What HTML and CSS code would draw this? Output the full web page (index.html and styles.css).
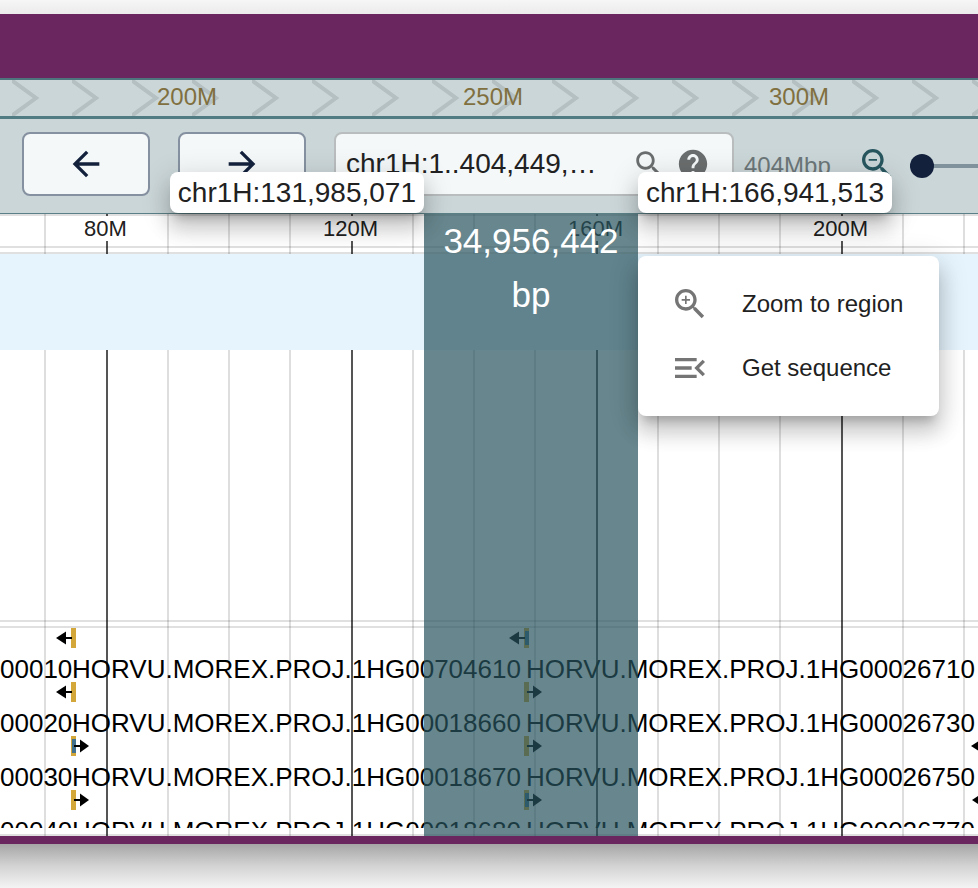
FILE: index.html
```html
<!DOCTYPE html>
<html lang="en">
<head>
<meta charset="utf-8">
<title>Genome view</title>
<link rel="stylesheet" href="styles.css">
</head>
<body>
<svg class="defs" aria-hidden="true">
  <defs>
    <pattern id="chevrons" x="12" y="0" width="60" height="36" patternUnits="userSpaceOnUse">
      <path d="M-2 -1 L24 18 L-2 37" fill="none" stroke="#b4c0c2" stroke-width="4"/>
    </pattern>
    <pattern id="gridlines" x="106" y="0" width="245" height="100" patternUnits="userSpaceOnUse">
      <path d="M62 0V100M123 0V100M184 0V100" stroke="#000" stroke-opacity=".13" stroke-width="2"/>
      <path d="M1 0V100" stroke="#555" stroke-width="2"/>
    </pattern>
    <g id="arrow-left"><path d="M3 10 13 3.500V16.500Z"/><rect x="12" y="9" width="7" height="2"/></g>
    <g id="arrow-right"><path d="M36 10 27 3.500V16.500Z"/><rect x="21" y="9" width="7" height="2"/></g>
    <rect id="utr" x="18" y="0" width="5" height="20" fill="#d4a73a"/>
    <rect id="cds" x="19" y="3" width="4" height="14" fill="#41718c"/>
  </defs>
</svg>
<div class="shade-top"></div>
<main class="window">
  <div class="overview">
    <svg class="overview-bg" aria-hidden="true"><rect width="100%" height="36" fill="url(#chevrons)"/></svg>
    <div class="overview-labels"><span>200M</span><span>250M</span><span>300M</span></div>
  </div>
  <header class="controls">
    <button class="pan" aria-label="Pan left"><svg class="icon" viewBox="0 0 24 24"><path d="M20 11H7.830l5.590-5.590L12 4l-8 8 8 8 1.410-1.410L7.830 13H20v-2z"/></svg></button>
    <button class="pan" aria-label="Pan right"><svg class="icon" viewBox="0 0 24 24"><path d="M12 4l-1.410 1.410L16.170 11H4v2h12.170l-5.580 5.590L12 20l8-8z"/></svg></button>
    <div class="search">
      <input type="text" aria-label="Location" value="chr1H:1..404,449,…">
      <button aria-label="Search"><svg class="icon-small" viewBox="0 0 24 24"><path d="M15.500 14h-.79l-.28-.27C15.410 12.590 16 11.110 16 9.500 16 5.910 13.090 3 9.500 3S3 5.910 3 9.500 5.910 16 9.500 16c1.610 0 3.090-.59 4.230-1.570l.27.28v.79l5 4.990L20.490 19l-4.990-5zm-6 0C7.010 14 5 11.990 5 9.500S7.010 5 9.500 5 14 7.010 14 9.500 11.990 14 9.500 14z"/></svg></button>
      <button aria-label="Help"><svg class="icon-small" viewBox="0 0 24 24"><path d="M12 2C6.480 2 2 6.480 2 12s4.480 10 10 10 10-4.480 10-10S17.520 2 12 2zm1 17h-2v-2h2v2zm2.070-7.750l-.9.920C13.450 12.900 13 13.500 13 15h-2v-.5c0-1.100.45-2.100 1.170-2.830l1.240-1.260c.37-.36.59-.86.59-1.410 0-1.100-.9-2-2-2s-2 .9-2 2H8c0-2.210 1.790-4 4-4s4 1.790 4 4c0 .88-.36 1.680-.93 2.250z"/></svg></button>
    </div>
    <span class="span-size">404Mbp</span>
    <button class="zoom-out" aria-label="Zoom out"><svg class="icon" viewBox="0 0 24 24"><path d="M15.500 14h-.79l-.28-.27C15.410 12.590 16 11.110 16 9.500 16 5.910 13.090 3 9.500 3S3 5.910 3 9.500 5.910 16 9.500 16c1.610 0 3.090-.59 4.230-1.570l.27.28v.79l5 4.990L20.490 19l-4.990-5zm-6 0C7.010 14 5 11.990 5 9.500S7.010 5 9.500 5 14 7.010 14 9.500 11.990 14 9.500 14zM7 9h5v1H7z"/></svg></button>
    <input class="zoom-slider" type="range" min="0" max="100" value="0" aria-label="Zoom level">
  </header>
  <section class="tracks">
    <svg class="gridlines" aria-hidden="true"><rect width="100%" height="100%" fill="url(#gridlines)"/></svg>
    <div class="ruler"><span>80M</span><span>120M</span><span>160M</span><span>200M</span></div>
    <div class="divider"></div>
    <div class="highlight-track"></div>
    <div class="empty-track"></div>
    <div class="divider"></div>
    <div class="genes">
      <div class="gene-row">
        <svg class="glyph first" viewBox="0 0 40 20"><use href="#utr"/><use href="#arrow-left"/></svg>
        <svg class="glyph" viewBox="0 0 40 20"><use href="#utr"/><use href="#cds"/><use href="#arrow-left"/></svg>
        <span class="cut">00010</span><span>HORVU.MOREX.PROJ.1HG00704610</span><span>HORVU.MOREX.PROJ.1HG00026710</span>
      </div>
      <div class="gene-row">
        <svg class="glyph first" viewBox="0 0 40 20"><use href="#utr"/><use href="#arrow-left"/></svg>
        <svg class="glyph" viewBox="0 0 40 20"><use href="#utr"/><use href="#arrow-right"/></svg>
        <span class="cut">00020</span><span>HORVU.MOREX.PROJ.1HG00018660</span><span>HORVU.MOREX.PROJ.1HG00026730</span>
      </div>
      <div class="gene-row">
        <svg class="glyph first" viewBox="0 0 40 20"><use href="#utr"/><use href="#cds"/><use href="#arrow-right"/></svg>
        <svg class="glyph" viewBox="0 0 40 20"><use href="#utr"/><use href="#arrow-right"/></svg>
        <svg class="glyph-edge" viewBox="2 0 8 20"><use href="#arrow-left"/></svg>
        <span class="cut">00030</span><span>HORVU.MOREX.PROJ.1HG00018670</span><span>HORVU.MOREX.PROJ.1HG00026750</span>
      </div>
      <div class="gene-row">
        <svg class="glyph first" viewBox="0 0 40 20"><use href="#utr"/><use href="#arrow-right"/></svg>
        <svg class="glyph" viewBox="0 0 40 20"><use href="#utr"/><use href="#cds"/><use href="#arrow-right"/></svg>
        <svg class="glyph-edge" viewBox="1 0 8 20"><use href="#arrow-left"/></svg>
        <span class="cut">00040</span><span>HORVU.MOREX.PROJ.1HG00018680</span><span>HORVU.MOREX.PROJ.1HG00026770</span>
      </div>
    </div>
    <div class="divider last"></div>
    <div class="selection">
      <p>34,956,442 bp</p>
      <div class="tip tip-start">chr1H:131,985,071</div>
      <div class="tip tip-end">chr1H:166,941,513</div>
      <div class="menu" role="menu">
        <button role="menuitem"><svg class="icon" viewBox="0 0 24 24"><path d="M15.500 14h-.79l-.28-.27C15.410 12.590 16 11.110 16 9.500 16 5.910 13.090 3 9.500 3S3 5.910 3 9.500 5.910 16 9.500 16c1.610 0 3.090-.59 4.230-1.570l.27.28v.79l5 4.990L20.490 19l-4.990-5zm-6 0C7.010 14 5 11.990 5 9.500S7.010 5 9.500 5 14 7.010 14 9.500 11.990 14 9.500 14zm.5-7H9v2H7v1h2v2h1v-2h2V9h-2z"/></svg>Zoom to region</button>
        <button role="menuitem"><svg class="icon" viewBox="0 0 24 24"><path d="M3 18h13v-2H3v2zm0-5h10v-2H3v2zm0-7v2h13V6H3zm18 9.590L17.420 12 21 8.410 19.590 7l-5 5 5 5L21 15.590z"/></svg>Get sequence</button>
      </div>
    </div>
  </section>
</main>
<div class="shade-bottom"></div>
</body>
</html>
```
FILE: styles.css
```css
* { box-sizing: border-box; }

html { background: #f6f6f6; }

body {
  margin: 0;
  overflow: hidden;
  font-family: "Liberation Sans", Arial, sans-serif;
  color: #212121;
}

button { margin: 0; padding: 0; border: 0; background: none; font: inherit; color: inherit; }

svg { display: block; fill: currentColor; }

.defs { position: absolute; width: 0; height: 0; }

.icon { flex: none; width: 40px; height: 40px; }
.icon-small { width: 34px; height: 34px; }

/* Even drop shadow above and below the full-width frame */
.shade-top { height: 14px; background: linear-gradient(#f6f6f6, #ebebeb); }
.shade-bottom { height: 44px; background: linear-gradient(#a6a6a6, #d3d3d3 50%, #f4f4f4); }

.window {
  padding: 64px 0 8px;
  background: #69265f;
}

.overview {
  position: relative;
  border-top: 2px solid #4c757d;
  border-bottom: 3px solid #517c83;
  background: #cbd6d8;
  overflow: hidden;
}

.overview-bg { position: absolute; inset: 0; width: 100%; height: 36px; }

.overview-labels {
  position: relative;
  display: flex;
  padding: 0 0 2px 34px;
  font-size: 24px;
  line-height: 34px;
  color: #80703f;
}

.overview-labels span { flex: none; width: 306px; text-align: center; }

.controls {
  display: flex;
  align-items: center;
  padding: 13px 0 17px 22px;
  background: #cbd6d8;
}

.pan {
  flex: none;
  display: flex;
  align-items: center;
  justify-content: center;
  width: 128px;
  height: 64px;
  margin-right: 28px;
  border: 2px solid #8591a0;
  border-radius: 8px;
  background: #f4f8f9;
  color: #13213d;
}

.search {
  flex: none;
  display: flex;
  align-items: center;
  gap: 10px;
  width: 400px;
  height: 64px;
  padding: 0 22px 0 10px;
  border: 2px solid #b9bdbd;
  border-radius: 8px;
  background: #f4f8f9;
  color: #6b6e6e;
}

.search input {
  flex: 1;
  min-width: 0;
  padding: 0;
  border: 0;
  outline: 0;
  background: none;
  font: inherit;
  font-size: 28px;
  color: #212121;
}

.span-size { margin: 4px 26px 0 10px; font-size: 24px; line-height: 28px; color: #6c7678; }

.zoom-out { color: #27565f; }

.zoom-slider {
  flex: 1;
  min-width: 0;
  height: 24px;
  margin: 4px 0 0 13px;
  appearance: none;
  background: linear-gradient(#80929c, #80929c) center / 100% 4px no-repeat;
}

.zoom-slider::-webkit-slider-thumb {
  appearance: none;
  width: 24px;
  height: 24px;
  border-radius: 50%;
  background: #13213d;
}

.tracks { position: relative; border-top: 1px solid #5b8187; background: #fff; }

.gridlines { position: absolute; inset: 0; width: 100%; height: 100%; }

.ruler {
  position: relative;
  display: flex;
  height: 34px;
  margin-left: -17px;
  border-top: 2px solid rgba(0, 0, 0, .12);
  border-bottom: 2px solid rgba(0, 0, 0, .12);
  font-size: 22px;
  line-height: 26px;
}

.ruler span { flex: none; width: 245px; text-align: center; }

/* White plate that interrupts the tick behind each number */
.ruler span::before {
  content: "";
  display: block;
  width: 8px;
  height: 25px;
  margin: 0 auto -25px;
  background: #fff;
}

.divider { position: relative; height: 6px; border-bottom: 2px solid rgba(0, 0, 0, .12); }
.divider.last { height: 8px; }

.highlight-track { position: relative; height: 96px; background: #e6f4fd; }

.empty-track { position: relative; height: 272px; border-bottom: 2px solid rgba(0, 0, 0, .12); }

.genes { position: relative; height: 200px; color: #000; overflow: hidden; }

.gene-row {
  display: grid;
  grid-template-columns: 72px 454px 1fr;
  grid-template-rows: 20px 26px;
  row-gap: 8px;
  font-size: 26px;
  line-height: 26px;
  white-space: nowrap;
}

.gene-row .cut { text-align: right; }
.gene-row span { grid-row: 2; }

.glyph { grid-area: 1 / 3; width: 40px; height: 20px; margin-left: -20px; }
.glyph.first { grid-area: 1 / 2; margin-left: -19px; }
.glyph-edge { grid-area: 1 / 3; justify-self: end; width: 8px; height: 20px; }

.selection {
  position: absolute;
  top: 0;
  bottom: 0;
  left: 424px;
  width: 214px;
  background: rgba(39, 82, 92, .7);
}

.selection p {
  margin: 0;
  padding: 0 18px;
  font-size: 35px;
  line-height: 54px;
  text-align: center;
  color: #fff;
}

.tip, .menu {
  position: absolute;
  border-radius: 8px;
  background: #fff;
  box-shadow:
    0 10px 10px -6px rgba(0, 0, 0, .2),
    0 16px 20px 2px rgba(0, 0, 0, .14),
    0 6px 28px 4px rgba(0, 0, 0, .12);
}

.tip {
  bottom: 100%;
  margin-bottom: 1px;
  padding: 0 8px;
  font-size: 28px;
  line-height: 41px;
  white-space: nowrap;
}

.tip-start { right: 100%; }
.tip-end { left: 100%; }

.menu { top: 42px; left: 100%; min-width: 301px; padding: 16px 0; }

.menu button {
  display: flex;
  align-items: center;
  gap: 32px;
  height: 64px;
  padding: 0 32px;
  font-size: 24px;
  white-space: nowrap;
}

.menu .icon { color: #757575; }
```
